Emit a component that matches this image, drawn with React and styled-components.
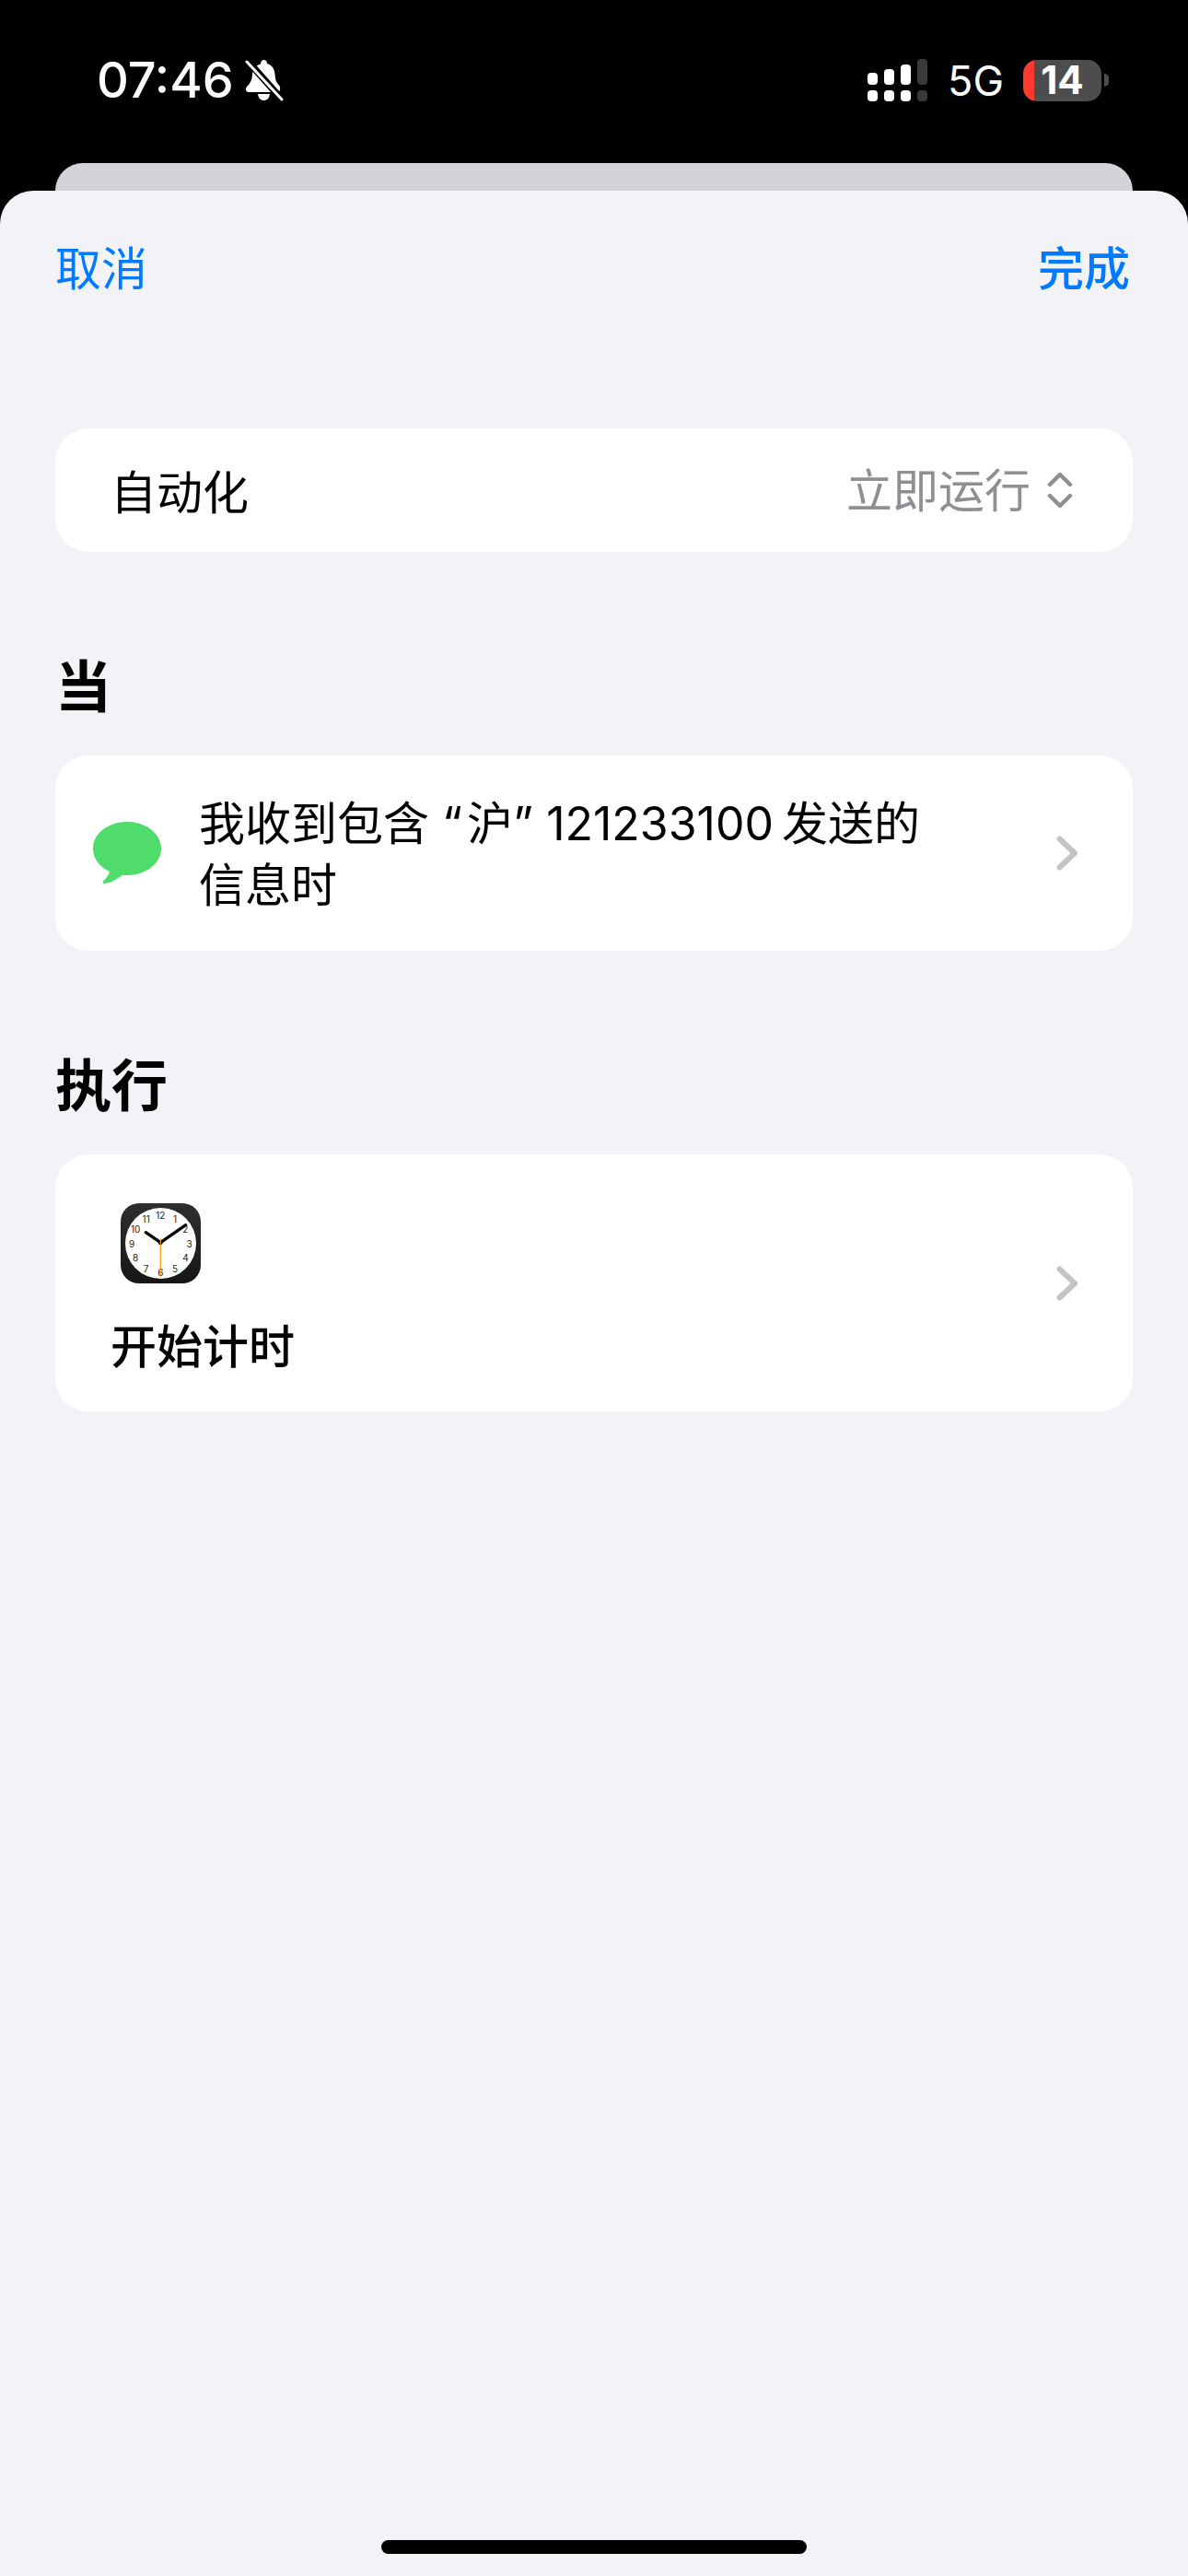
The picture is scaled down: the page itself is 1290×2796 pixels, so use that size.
import React from "react";
import styled, { createGlobalStyle } from "styled-components";

const FONT = `Inter, "Noto Sans CJK SC", sans-serif`;

const GlobalStyle = createGlobalStyle`
  html, body {
    margin: 0;
    padding: 0;
    background: #000;
  }
  body {
    font-family: ${FONT};
  }
`;

const Screen = styled.div`
  width: 1290px;
  height: 2796px;
  display: flex;
  flex-direction: column;
  background: #000;
  overflow: hidden;
`;

const StatusBar = styled.div`
  height: 177px;
  flex-shrink: 0;
  display: flex;
  align-items: center;
  justify-content: space-between;
  padding: 0 86px 3px 105px;
  box-sizing: border-box;
  color: #fff;
`;

const StatusLeft = styled.div`
  display: flex;
  align-items: center;
  gap: 12px;
`;

const Time = styled.span`
  font-size: 54px;
  font-weight: 500;
  line-height: 1;
`;

const StatusRight = styled.div`
  display: flex;
  align-items: center;
`;

const NetworkLabel = styled.span`
  font-size: 45px;
  font-weight: 400;
  line-height: 1;
  margin: 0 21px 0 22px;
`;

const Battery = styled.div`
  width: 85px;
  height: 45px;
  border-radius: 15px;
  background: linear-gradient(to right, #ff3b30 12px, #4d4d4d 12px);
  display: flex;
  align-items: center;
  justify-content: center;
  box-sizing: border-box;
  font-size: 42px;
  font-weight: 700;
  line-height: 1;
`;

const BatteryNub = styled.div`
  width: 5px;
  height: 14px;
  margin-left: 3px;
  border-radius: 0 6px 6px 0;
  background: #4d4d4d;
`;

const BackSheet = styled.div`
  height: 30px;
  flex-shrink: 0;
  margin: 0 60px;
  background: #d3d3d8;
  border-radius: 30px 30px 0 0;
`;

const Sheet = styled.div`
  flex: 1;
  display: flex;
  flex-direction: column;
  background: #f2f2f7;
  border-radius: 36px 36px 0 0;
  padding: 0 60px 24px;
  box-sizing: border-box;
`;

const NavBar = styled.div`
  height: 258px;
  flex-shrink: 0;
  display: flex;
  justify-content: space-between;
  padding: 55px 3px 0 0;
  box-sizing: border-box;
`;

const NavButton = styled.span`
  font-size: 50px;
  line-height: 60px;
  height: 60px;
  color: #007aff;
  font-weight: ${(props) => (props.$strong ? 500 : 400)};
`;

const Card = styled.div`
  background: #fff;
  border-radius: 36px;
  display: flex;
  align-items: center;
  justify-content: space-between;
  box-sizing: border-box;
  height: ${(props) => props.$height}px;
  padding: 0 ${(props) => props.$right}px 0 ${(props) => props.$left}px;
`;

const RowLabel = styled.span`
  font-size: 50px;
  line-height: 66px;
  padding-top: 5px;
  color: #000;
`;

const RowValue = styled.div`
  display: flex;
  align-items: center;
  gap: 18px;
`;

const RowValueText = styled.span`
  font-size: 50px;
  line-height: 66px;
  padding-top: 2px;
  color: #8e8e93;
`;

const SectionTitle = styled.h2`
  margin: 111px 0 38px;
  font-size: 61px;
  line-height: 72px;
  font-weight: 700;
  color: #000;
`;

const RowMain = styled.div`
  display: flex;
  align-items: center;
  gap: 41px;
`;

const MessageText = styled.div`
  padding-top: 4px;
  font-size: 50px;
  line-height: 67px;
  color: #000;
`;

const MessageLine = styled.div`
  white-space: pre;
`;

// the quoted word and the number sit a little wider than the font's own spacing
const QuotedWord = styled.span`
  margin-left: 5px;
`;

const SenderNumber = styled.span`
  margin-right: 9px;
`;

const ActionBody = styled.div`
  display: flex;
  flex-direction: column;
  align-items: flex-start;
  gap: 39px;
  padding-top: 13px;
`;

const ClockTile = styled.svg`
  display: block;
  margin-left: 11px;
`;

const ActionLabel = styled.span`
  font-size: 50px;
  line-height: 60px;
  font-weight: 500;
  color: #000;
`;

const HomeIndicator = styled.div`
  width: 462px;
  height: 15px;
  margin: auto auto 0;
  border-radius: 8px;
  background: #000;
`;

const SignalIcon = () => (
  <svg width="65" height="46" viewBox="0 0 65 46">
    <g fill="#fff">
      <rect x="0" y="15" width="11" height="13" rx="4" />
      <rect x="18" y="11" width="11" height="17" rx="4" />
      <rect x="36" y="6" width="11" height="22" rx="4" />
      <rect x="0" y="34" width="11" height="12" rx="4" />
      <rect x="18" y="34" width="11" height="12" rx="4" />
      <rect x="36" y="34" width="11" height="12" rx="4" />
    </g>
    <g fill="#3a3a3a">
      <rect x="54" y="0" width="11" height="28" rx="4" />
      <rect x="54" y="34" width="11" height="12" rx="4" />
    </g>
  </svg>
);

const BellSlashIcon = () => (
  <svg width="42" height="46" viewBox="0 0 42 46">
    <path
      fill="#fff"
      d="M17 5.500C17 2.500 18.500 1 20.500 1S24 2.500 24 5C29.500 6.500 32 11 32.500 16.500C33 22.500 34 25.500 37 28.500C39 30.500 38.500 36 35.500 36H4C0.500 36 0 32 2.500 29.500C6 26 7.500 23 8 17C8.500 11 11.500 7 17 5.500Z"
    />
    <path fill="#fff" d="M14 38H27C26.500 42.500 23.800 45 20.500 45S14.500 42.500 14 38Z" />
    <path stroke="#000" strokeWidth="7.500" d="M2 1L41 45" />
    <path stroke="#fff" strokeWidth="3" strokeLinecap="round" d="M2 3L40 44" />
  </svg>
);

const UpDownChevrons = () => (
  <svg width="28" height="40" viewBox="0 0 28 40" fill="none">
    <path
      d="M3 14L14 3L25 14M3 26L14 37L25 26"
      stroke="#8e8e93"
      strokeWidth="4.400"
      strokeLinecap="round"
      strokeLinejoin="round"
    />
  </svg>
);

const DisclosureChevron = () => (
  <svg width="24" height="38" viewBox="0 0 24 38" fill="none">
    <path
      d="M3.500 3.500L20 19L3.500 34.500"
      stroke="#c4c4c7"
      strokeWidth="6"
      strokeLinecap="round"
      strokeLinejoin="round"
    />
  </svg>
);

const MessageBubble = () => (
  <svg width="74" height="68" viewBox="0 0 74 68">
    <path
      fill="#4fdc6a"
      d="M37 0C57.500 0 74 12.800 74 29S57.500 58 37 58C35 58 33 58 32 57.800C26 62 19 66.500 12.500 67C10.500 67 10 65.500 11 64.500C14 61.500 17 58 18 54C7 49 0 39.800 0 29C0 12.800 16.500 0 37 0Z"
    />
  </svg>
);

const CLOCK_NUMBERS = [12, 1, 2, 3, 4, 5, 6, 7, 8, 9, 10, 11];

const ClockIcon = () => (
  <ClockTile width="87" height="87" viewBox="0 0 87 87">
    <defs>
      <linearGradient id="tile" x1="0" y1="0" x2="0" y2="1">
        <stop offset="0" stopColor="#2f2f2f" />
        <stop offset="1" stopColor="#161616" />
      </linearGradient>
    </defs>
    <rect width="87" height="87" rx="20" fill="url(#tile)" />
    <circle cx="43.500" cy="43.500" r="38.500" fill="#fff" />
    {CLOCK_NUMBERS.map((n, i) => {
      const angle = (i * Math.PI) / 6;
      return (
        <text
          key={n}
          x={43.3 + 31.3 * Math.sin(angle)}
          y={43.8 - 31.3 * Math.cos(angle)}
          fontSize="10"
          fontFamily="Inter, sans-serif"
          fill="#222"
          textAnchor="middle"
          dominantBaseline="central"
        >
          {n}
        </text>
      );
    })}
    <path d="M43.300 42.700L27.300 31.700M43.300 42.700L70.700 23.700" stroke="#000" strokeWidth="3.300" strokeLinecap="round" />
    <circle cx="43.300" cy="43" r="2.300" fill="#000" />
    <path d="M43.300 38.700V79.300" stroke="#ff9500" strokeWidth="1.200" />
  </ClockTile>
);

export default function App() {
  return (
    <Screen>
      <GlobalStyle />
      <StatusBar>
        <StatusLeft>
          <Time>07:46</Time>
          <BellSlashIcon />
        </StatusLeft>
        <StatusRight>
          <SignalIcon />
          <NetworkLabel>5G</NetworkLabel>
          <Battery>14</Battery>
          <BatteryNub />
        </StatusRight>
      </StatusBar>
      <BackSheet />
      <Sheet>
        <NavBar>
          <NavButton>取消</NavButton>
          <NavButton $strong>完成</NavButton>
        </NavBar>
        <Card $height={134} $left={60} $right={65}>
          <RowLabel>自动化</RowLabel>
          <RowValue>
            <RowValueText>立即运行</RowValueText>
            <UpDownChevrons />
          </RowValue>
        </Card>
        <SectionTitle>当</SectionTitle>
        <Card $height={212} $left={41} $right={59}>
          <RowMain>
            <MessageBubble />
            <MessageText>
              <MessageLine>
                我收到包含 “<QuotedWord>沪</QuotedWord>” <SenderNumber>121233100</SenderNumber>发送的
              </MessageLine>
              <MessageLine>信息时</MessageLine>
            </MessageText>
          </RowMain>
          <DisclosureChevron />
        </Card>
        <SectionTitle>执行</SectionTitle>
        <Card $height={279} $left={60} $right={59}>
          <ActionBody>
            <ClockIcon />
            <ActionLabel>开始计时</ActionLabel>
          </ActionBody>
          <DisclosureChevron />
        </Card>
        <HomeIndicator />
      </Sheet>
    </Screen>
  );
}
